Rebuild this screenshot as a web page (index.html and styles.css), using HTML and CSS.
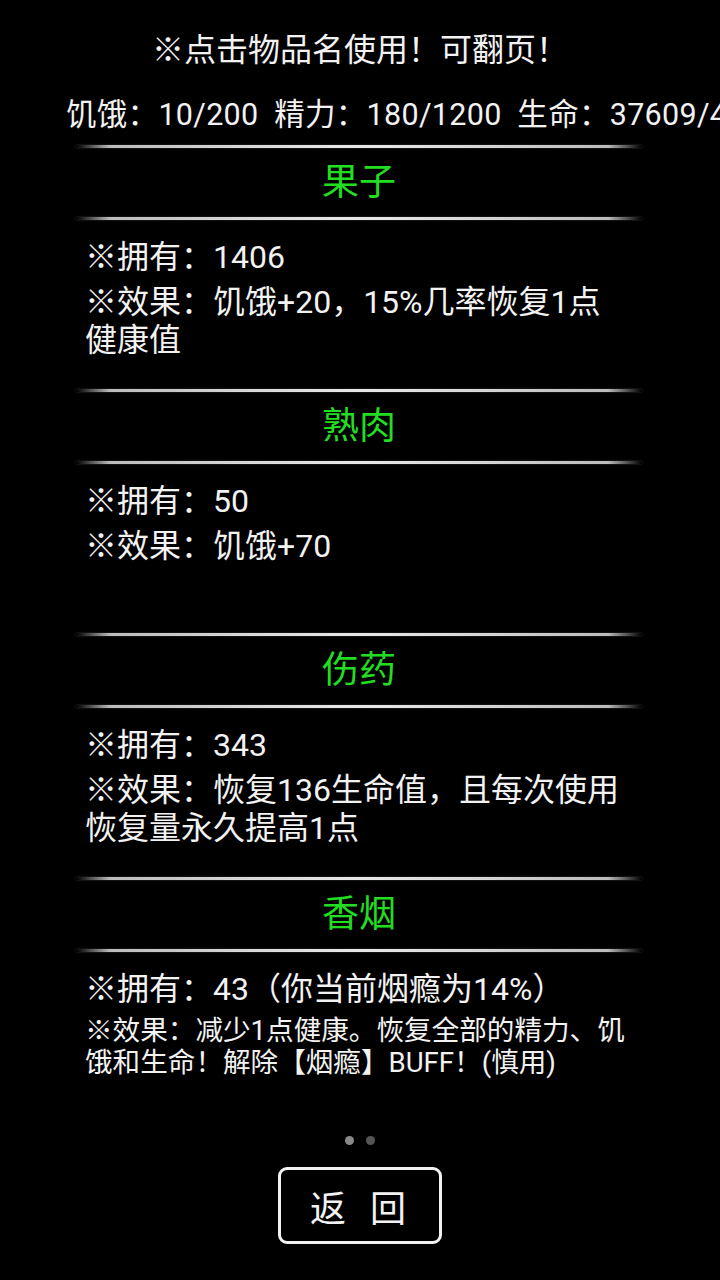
FILE: index.html
```html
<!DOCTYPE html>
<html lang="zh-CN">
<head>
    <meta charset="UTF-8">
    <meta name="viewport" content="width=device-width, initial-scale=1.0">
    <title>物品</title>
    <link rel="stylesheet" href="styles.css">
</head>
<body>
    <div class="tip">※点击物品名使用！可翻页！</div>
    <div class="stats">饥饿：10/200&nbsp;&nbsp;精力：180/1200&nbsp;&nbsp;生命：37609/4</div>

    <div class="list">
        <div class="item">
            <div class="divider"></div>
            <div class="name">果子</div>
            <div class="divider"></div>
            <div class="info">
                <p>※拥有：1406</p>
                <p>※效果：饥饿+20，15%几率恢复1点健康值</p>
            </div>
        </div>
        <div class="item">
            <div class="divider"></div>
            <div class="name">熟肉</div>
            <div class="divider"></div>
            <div class="info">
                <p>※拥有：50</p>
                <p>※效果：饥饿+70</p>
            </div>
        </div>
        <div class="item">
            <div class="divider"></div>
            <div class="name">伤药</div>
            <div class="divider"></div>
            <div class="info">
                <p>※拥有：343</p>
                <p>※效果：恢复136生命值，且每次使用恢复量永久提高1点</p>
            </div>
        </div>
        <div class="item">
            <div class="divider"></div>
            <div class="name">香烟</div>
            <div class="divider"></div>
            <div class="info">
                <p>※拥有：43（你当前烟瘾为14%）</p>
                <p class="small">※效果：减少1点健康。恢复全部的精力、饥饿和生命！解除【烟瘾】BUFF！(慎用)</p>
            </div>
        </div>
    </div>

    <div class="dots">
        <span class="dot active"></span>
        <span class="dot"></span>
    </div>

    <div class="footer">
        <button class="back-button">返回</button>
    </div>
</body>
</html>
```

FILE: styles.css
```css
body {
    margin: 0;
    width: 720px;
    height: 1280px;
    overflow: hidden;
    background: #000;
    color: #f2f2f2;
    font-family: Roboto, "Noto Sans CJK SC", sans-serif;
}
.tip {
    margin-top: 30px;
    height: 40px;
    line-height: 40px;
    font-size: 32px;
    text-align: center;
}
.stats {
    margin-top: 25px;
    padding-left: 66px;
    height: 40px;
    line-height: 40px;
    font-size: 30.5px;
    letter-spacing: 0.3px;
    white-space: nowrap;
    overflow: hidden;
}
.list {
    margin-top: 10px;
    margin-left: 76px;
    width: 566px;
}
.item {
    height: 244px;
}
.divider {
    height: 3px;
    background: linear-gradient(to right, rgba(200,200,200,0), #bbb 6%, #d8d8d8 30%, #e8e8e8 50%, #d8d8d8 70%, #bbb 94%, rgba(200,200,200,0));
    box-shadow: 0 0 2px rgba(255,255,255,0.25);
}
.name {
    height: 69px;
    line-height: 69px;
    text-align: center;
    font-size: 37px;
    color: #22dd22;
}
.info {
    padding: 18px 14px 0 9px;
}
.info p {
    margin: 0 0 7px 0;
    font-size: 32px;
    line-height: 38px;
}
.info p.small {
    font-size: 27.6px;
    line-height: 32px;
}
.dots {
    display: flex;
    justify-content: center;
    gap: 12px;
    margin-top: 15px;
    height: 9px;
}
.dot {
    width: 9px;
    height: 9px;
    border-radius: 50%;
    background: #555;
}
.dot.active {
    background: #888;
}
.footer {
    display: flex;
    justify-content: center;
    margin-top: 22px;
}
.back-button {
    width: 164px;
    height: 77px;
    background: #000;
    color: #f2f2f2;
    border: 3px solid #f2f2f2;
    border-radius: 9px;
    font-family: Roboto, "Noto Sans CJK SC", sans-serif;
    font-size: 36px;
    letter-spacing: 24px;
    padding: 0 0 0 20px;
}
```
